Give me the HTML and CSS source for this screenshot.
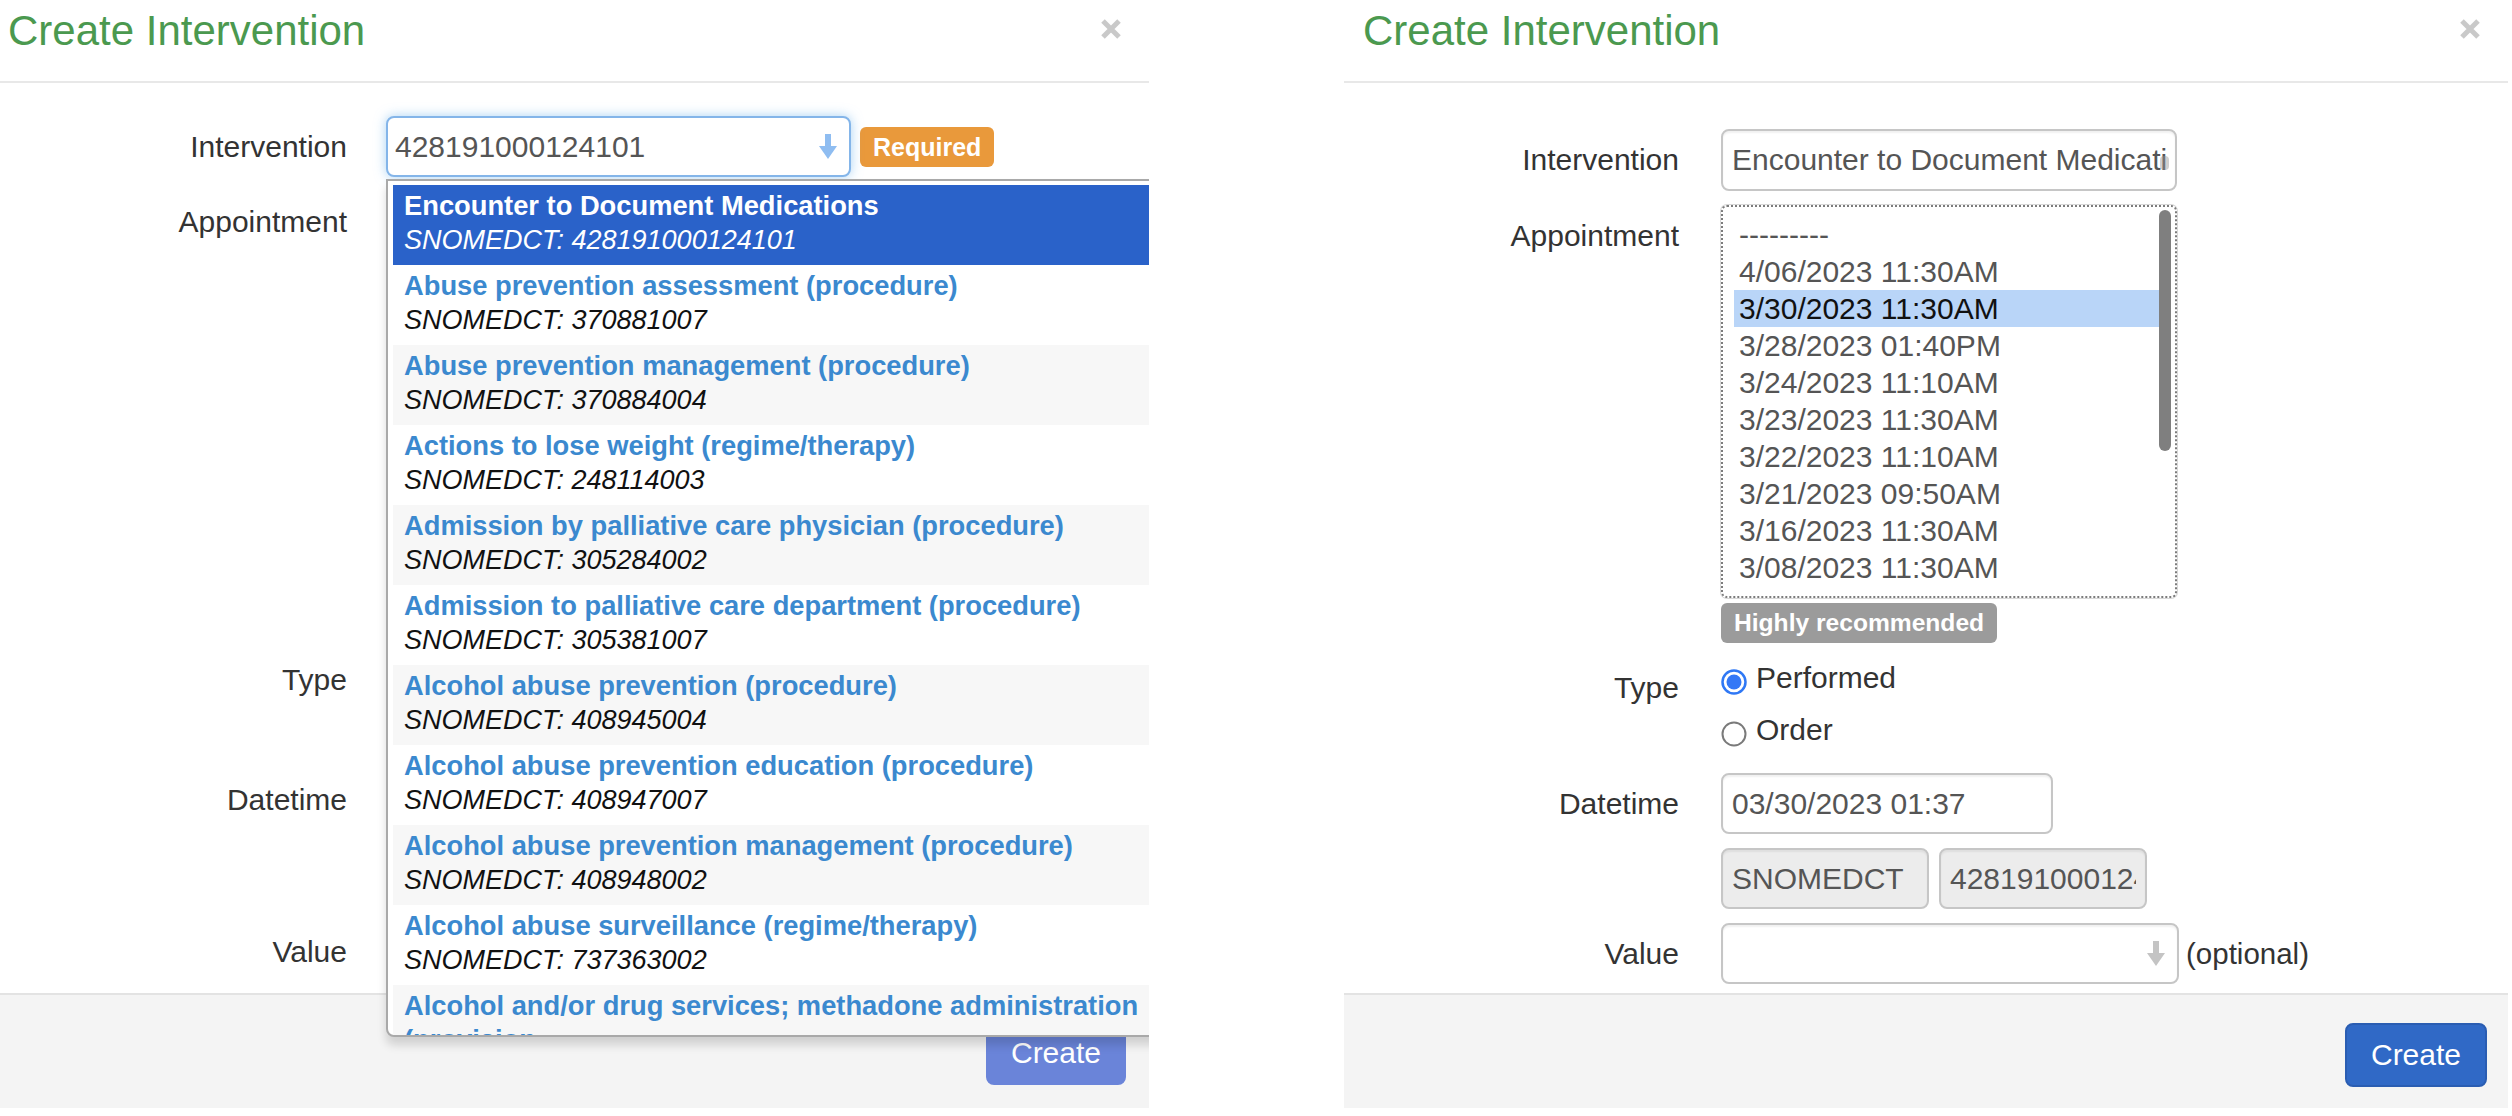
FILE: index.html
```html
<!DOCTYPE html>
<html lang="en">
<head>
<meta charset="utf-8">
<title>Create Intervention</title>
<link rel="stylesheet" href="styles.css">
</head>
<body>
<div class="stage">

  <section class="modal modal-left">
    <header class="modal-header">
      <h4 class="modal-title">Create Intervention</h4>
      <span class="close"><svg viewBox="0 0 22 22" width="22" height="22"><path d="M3 3 L19 19 M19 3 L3 19" stroke="#c9c9c9" stroke-width="5"/></svg></span>
    </header>
    <div class="modal-body">
      <div class="form">
        <div class="row row-intervention">
          <label class="lbl">Intervention</label>
          <div class="field">
            <div class="ctrl s2 s2-focus">
              <span class="ctrl-text">428191000124101</span>
              <svg class="arrow" viewBox="0 0 20 28" width="20" height="28"><rect x="7" y="1" width="6" height="14" fill="#8fbdf1"/><polygon points="1,13 19,13 10,26" fill="#8fbdf1"/></svg>
            </div>
            <span class="badge badge-req">Required</span>
          </div>
        </div>
        <div class="row row-appt">
          <label class="lbl">Appointment</label>
          <div class="field field-col">
            <div class="ctrl sel-multi"></div>
            <span class="badge badge-rec">Highly recommended</span>
          </div>
        </div>
        <div class="row row-type">
          <label class="lbl">Type</label>
          <div class="field field-col">
            <div class="radio"><svg class="rd" viewBox="0 0 26 26" width="26" height="26"><circle cx="13" cy="13" r="11.5" fill="#fff" stroke="#2f78f5" stroke-width="2.5"/><circle cx="13" cy="13" r="7.5" fill="#3478f6"/></svg><span>Performed</span></div>
            <div class="radio"><svg class="rd" viewBox="0 0 26 26" width="26" height="26"><circle cx="13" cy="13" r="11.5" fill="#fff" stroke="#7a7a7a" stroke-width="2"/></svg><span>Order</span></div>
          </div>
        </div>
        <div class="row row-dt">
          <label class="lbl">Datetime</label>
          <div class="field"><div class="ctrl input-dt"></div></div>
        </div>
        <div class="row row-codes">
          <span class="lbl"></span>
          <div class="field gap10">
            <div class="ctrl input-code ro"></div>
            <div class="ctrl input-code ro"></div>
          </div>
        </div>
        <div class="row row-value">
          <label class="lbl">Value</label>
          <div class="field gap10">
            <div class="ctrl s2 value-sel"></div>
          </div>
        </div>
      </div>

      <div class="dd">
        <ul class="dd-list">
          <li class="dd-item hl"><div class="dd-title">Encounter to Document Medications</div><div class="dd-code">SNOMEDCT: 428191000124101</div></li>
          <li class="dd-item"><div class="dd-title">Abuse prevention assessment (procedure)</div><div class="dd-code">SNOMEDCT: 370881007</div></li>
          <li class="dd-item alt"><div class="dd-title">Abuse prevention management (procedure)</div><div class="dd-code">SNOMEDCT: 370884004</div></li>
          <li class="dd-item"><div class="dd-title">Actions to lose weight (regime/therapy)</div><div class="dd-code">SNOMEDCT: 248114003</div></li>
          <li class="dd-item alt"><div class="dd-title">Admission by palliative care physician (procedure)</div><div class="dd-code">SNOMEDCT: 305284002</div></li>
          <li class="dd-item"><div class="dd-title">Admission to palliative care department (procedure)</div><div class="dd-code">SNOMEDCT: 305381007</div></li>
          <li class="dd-item alt"><div class="dd-title">Alcohol abuse prevention (procedure)</div><div class="dd-code">SNOMEDCT: 408945004</div></li>
          <li class="dd-item"><div class="dd-title">Alcohol abuse prevention education (procedure)</div><div class="dd-code">SNOMEDCT: 408947007</div></li>
          <li class="dd-item alt"><div class="dd-title">Alcohol abuse prevention management (procedure)</div><div class="dd-code">SNOMEDCT: 408948002</div></li>
          <li class="dd-item"><div class="dd-title">Alcohol abuse surveillance (regime/therapy)</div><div class="dd-code">SNOMEDCT: 737363002</div></li>
          <li class="dd-item alt"><div class="dd-title wrap">Alcohol and/or drug services; methadone administration (provision</div></li>
        </ul>
      </div>
    </div>
    <footer class="modal-footer">
      <button class="btn btn-faded">Create</button>
    </footer>
  </section>

  <section class="modal modal-right">
    <header class="modal-header">
      <h4 class="modal-title">Create Intervention</h4>
      <span class="close"><svg viewBox="0 0 22 22" width="22" height="22"><path d="M3 3 L19 19 M19 3 L3 19" stroke="#c9c9c9" stroke-width="5"/></svg></span>
    </header>
    <div class="modal-body">
      <div class="form">
        <div class="row row-intervention">
          <label class="lbl">Intervention</label>
          <div class="field">
            <div class="ctrl s2">
              <span class="ctrl-text clip">Encounter to Document Medications</span>
              <span class="blob"></span>
            </div>
          </div>
        </div>
        <div class="row row-appt">
          <label class="lbl">Appointment</label>
          <div class="field field-col">
            <div class="ctrl sel-multi">
              <ul class="opts">
                <li>---------</li>
                <li>4/06/2023 11:30AM</li>
                <li class="sel">3/30/2023 11:30AM</li>
                <li>3/28/2023 01:40PM</li>
                <li>3/24/2023 11:10AM</li>
                <li>3/23/2023 11:30AM</li>
                <li>3/22/2023 11:10AM</li>
                <li>3/21/2023 09:50AM</li>
                <li>3/16/2023 11:30AM</li>
                <li>3/08/2023 11:30AM</li>
              </ul>
              <span class="thumb"></span>
            </div>
            <span class="badge badge-rec">Highly recommended</span>
          </div>
        </div>
        <div class="row row-type">
          <label class="lbl">Type</label>
          <div class="field field-col">
            <div class="radio"><svg class="rd" viewBox="0 0 26 26" width="26" height="26"><circle cx="13" cy="13" r="11.5" fill="#fff" stroke="#2f78f5" stroke-width="2.5"/><circle cx="13" cy="13" r="7.5" fill="#3478f6"/></svg><span>Performed</span></div>
            <div class="radio"><svg class="rd" viewBox="0 0 26 26" width="26" height="26"><circle cx="13" cy="13" r="11.5" fill="#fff" stroke="#7a7a7a" stroke-width="2"/></svg><span>Order</span></div>
          </div>
        </div>
        <div class="row row-dt">
          <label class="lbl">Datetime</label>
          <div class="field"><div class="ctrl input-dt"><span class="ctrl-text">03/30/2023 01:37</span></div></div>
        </div>
        <div class="row row-codes">
          <span class="lbl"></span>
          <div class="field gap10">
            <div class="ctrl input-code ro"><span class="ctrl-text">SNOMEDCT</span></div>
            <div class="ctrl input-code ro"><span class="ctrl-text clip">428191000124101</span></div>
          </div>
        </div>
        <div class="row row-value">
          <label class="lbl">Value</label>
          <div class="field gap7">
            <div class="ctrl s2 value-sel">
              <span class="ctrl-text"></span>
              <svg class="arrow" viewBox="0 0 20 28" width="20" height="28"><rect x="7" y="1" width="6" height="14" fill="#c4c4c4"/><polygon points="1,13 19,13 10,26" fill="#c4c4c4"/></svg>
            </div>
            <span class="opt-note">(optional)</span>
          </div>
        </div>
      </div>
    </div>
    <footer class="modal-footer">
      <button class="btn btn-primary">Create</button>
    </footer>
  </section>

</div>
</body>
</html>
```

FILE: styles.css
```css
html, body {
  margin: 0;
  padding: 0;
  background: #fff;
}
body {
  font-family: "Liberation Sans", Arial, "Helvetica Neue", sans-serif;
  color: #333;
  width: 2512px;
  height: 1116px;
  overflow: hidden;
}
.stage {
  display: flex;
  gap: 195px;
  height: 1116px;
}
.modal {
  position: relative;
  display: flex;
  flex-direction: column;
  height: 1108px;
  overflow: hidden;
  background: #fff;
}
.modal-left { width: 1149px; }
.modal-right { width: 1164px; }

.modal-header {
  display: flex;
  justify-content: space-between;
  align-items: flex-start;
  height: 81px;
  box-sizing: content-box;
  border-bottom: 2px solid #e8e8e8;
  padding-right: 27px;
}
.modal-left .modal-header { padding-left: 8px; }
.modal-right .modal-header { padding-left: 19px; }
.modal-title {
  margin: 0;
  padding-top: 8px;
  font-size: 42px;
  line-height: 46px;
  font-weight: 400;
  color: #4b994f;
}
.close {
  display: block;
  margin-top: 18px;
  width: 22px;
  height: 22px;
}
.close svg { display: block; }

.modal-body {
  position: relative;
  flex: 1;
}
.modal-left .modal-body { padding-top: 33px; }
.modal-right .modal-body { padding-top: 46px; }

.form { display: flex; flex-direction: column; }
.row {
  display: grid;
  align-items: start;
}
.modal-left .row { grid-template-columns: 347px 1fr; column-gap: 39px; }
.modal-right .row { grid-template-columns: 335px 1fr; column-gap: 42px; }

.lbl {
  display: block;
  text-align: right;
  font-size: 30px;
  line-height: 42px;
  padding-top: 10px;
  color: #333;
  white-space: nowrap;
}
.field {
  display: flex;
  align-items: center;
}
.field-col {
  flex-direction: column;
  align-items: flex-start;
}
.gap10 { gap: 10px; }
.gap7 { gap: 7px; }

.row-intervention { margin-bottom: 14px; }
.row-appt { margin-bottom: 14px; }
.row-type { margin-bottom: 22px; }
.row-dt { margin-bottom: 14px; }
.row-codes { margin-bottom: 14px; }
.modal-left .row-type { margin-bottom: 26px; }
.modal-left .row-codes { margin-bottom: 16px; }

.ctrl {
  position: relative;
  box-sizing: border-box;
  height: 61px;
  border: 2px solid #c6c6c6;
  border-radius: 8px;
  background: #fff;
  box-shadow: inset 0 2px 2px rgba(0,0,0,.06);
  display: flex;
  align-items: center;
  padding: 0 9px;
  overflow: hidden;
}
.ctrl-text {
  font-size: 30px;
  line-height: 42px;
  color: #555;
  white-space: nowrap;
}
.clip { overflow: hidden; }

.s2 { width: 456px; height: 62px; justify-content: space-between; }
.modal-left .s2 { width: 465px; height: 61px; padding-left: 7px; }
.s2-focus {
  border-color: #84b5e9;
  box-shadow: 0 0 12px rgba(102,175,233,.55);
  overflow: visible;
}
.s2 .ctrl-text.clip { width: 436px; flex: none; }
.arrow { display: block; flex: none; margin-right: 2px; }
.blob {
  position: absolute;
  right: 6px;
  top: 25px;
  width: 9px;
  height: 14px;
  border-radius: 4px;
  background: rgba(150,150,150,.45);
}

.badge {
  display: inline-block;
  height: 40px;
  line-height: 40px;
  padding: 0 13px;
  border-radius: 6px;
  color: #fff;
  font-size: 25px;
  font-weight: 700;
  white-space: nowrap;
}
.badge-req { background: #e9993b; margin-left: 9px; }
.badge-rec { background: #9b9b9b; margin-top: 5px; font-size: 24.6px; }

.sel-multi {
  width: 456px;
  height: 393px;
  display: block;
  padding: 0;
  border: 2px dotted #7c7c7c;
  border-radius: 6px;
  box-shadow: 0 0 0 1px #d8d8d8;
}
.modal-left .sel-multi { width: 465px; height: 399px; box-shadow: none; }
.opts {
  list-style: none;
  margin: 0;
  padding: 9px 12px 0 11px;
}
.opts li {
  height: 37px;
  line-height: 37px;
  padding-left: 5px;
  font-size: 30px;
  color: #555;
  white-space: nowrap;
}
.opts li.sel { background: #b9d5f8; color: #111; }
.thumb {
  position: absolute;
  right: 4px;
  top: 3px;
  width: 12px;
  height: 241px;
  border-radius: 6px;
  background: #7f7f7f;
}

.row-type .field-col { gap: 10px; }
.radio {
  display: flex;
  align-items: flex-start;
  height: 42px;
  font-size: 30px;
  line-height: 42px;
  color: #333;
}
.rd { display: block; margin-top: 12px; margin-right: 9px; flex: none; }

.input-dt { width: 332px; }
.input-code { width: 208px; }
.input-code .ctrl-text.clip { width: 188px; }
.ro { background: #ececec; }
.value-sel { width: 458px; height: 61px; }
.opt-note {
  font-size: 29.5px;
  line-height: 42px;
  color: #333;
}

/* dropdown (select2 results) */
.dd {
  position: absolute;
  left: 386px;
  top: 96px;
  width: 820px;
  height: 858px;
  box-sizing: border-box;
  border: 2px solid #a9a9a9;
  border-radius: 0 0 8px 8px;
  background: #fff;
  overflow: hidden;
  box-shadow: 0 8px 10px rgba(0,0,0,.15);
}
.dd-list {
  list-style: none;
  margin: 4px 0 0 0;
  padding: 0 0 0 5px;
}
.dd-item {
  height: 80px;
  box-sizing: border-box;
  padding: 4px 11px 0;
  white-space: nowrap;
}
.dd-item.alt { background: #f7f7f7; }
.dd-item.hl { background: #2a62c9; }
.dd-title {
  font-size: 27.3px;
  line-height: 34px;
  font-weight: 700;
  color: #3b89cf;
}
.dd-title.wrap { white-space: normal; width: 760px; }
.dd-code {
  font-size: 27px;
  line-height: 34px;
  font-style: italic;
  color: #111;
}
.dd-item.hl .dd-title, .dd-item.hl .dd-code { color: #fff; }

/* footer */
.modal-footer {
  box-sizing: border-box;
  height: 115px;
  border-top: 2px solid #e3e3e3;
  background: #f4f4f4;
  display: flex;
  justify-content: flex-end;
  align-items: flex-start;
}
.modal-left .modal-footer { padding: 26px 23px 0 0; }
.modal-right .modal-footer { padding: 28px 21px 0 0; }
.btn {
  width: 142px;
  height: 64px;
  border-radius: 8px;
  font-family: "Liberation Sans", Arial, sans-serif;
  font-size: 30px;
  color: #fff;
  padding: 0;
}
.btn-primary {
  background: #3069c6;
  border: 2px solid #2a5db2;
}
.btn-faded {
  width: 140px;
  background: #6a84d9;
  border: 2px solid #6a84d9;
}
```
